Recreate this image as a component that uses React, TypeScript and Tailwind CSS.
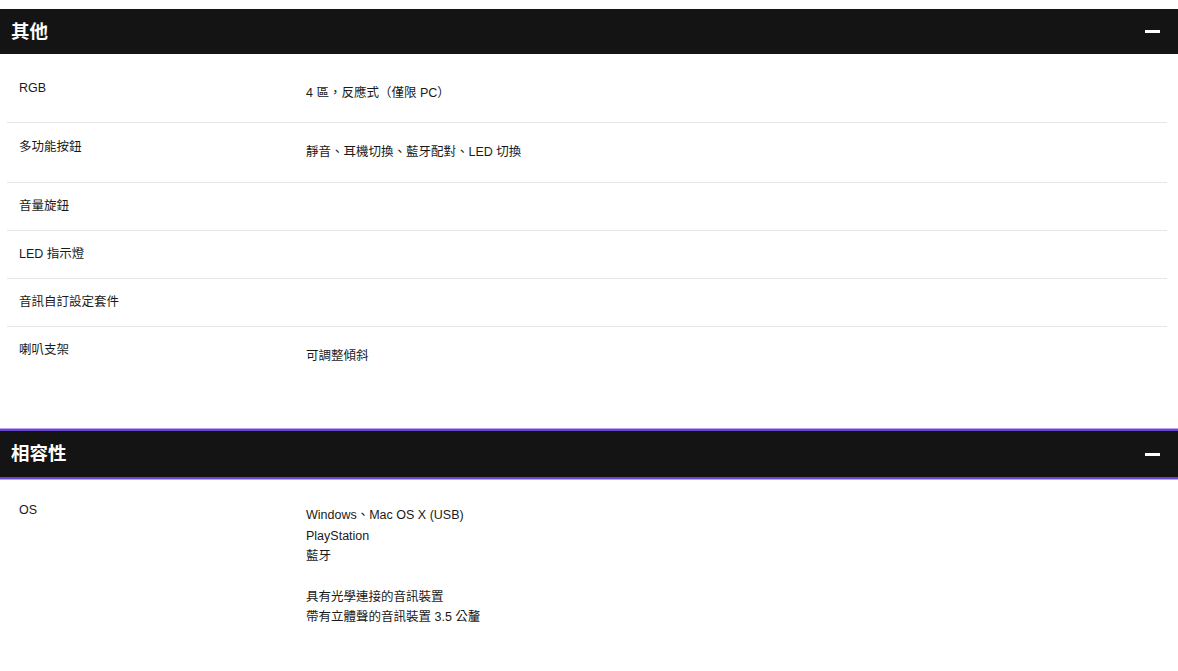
import React from 'react';

type Spec = { label: string; value?: string[] };

const other: Spec[] = [
  { label: 'RGB', value: ['4 區，反應式（僅限 PC）'] },
  { label: '多功能按鈕', value: ['靜音、耳機切換、藍牙配對、LED 切換'] },
  { label: '音量旋鈕' },
  { label: 'LED 指示燈' },
  { label: '音訊自訂設定套件' },
  { label: '喇叭支架', value: ['可調整傾斜'] },
];

const compat: Spec[] = [
  {
    label: 'OS',
    value: ['Windows、Mac OS X (USB)', 'PlayStation', '藍牙', '', '具有光學連接的音訊裝置', '帶有立體聲的音訊裝置 3.5 公釐'],
  },
];

function SectionHeader({ title, active }: { title: string; active?: boolean }) {
  return (
    <div
      className={`flex items-center justify-between bg-[#141414] pl-[11px] pr-[18px] ${
        active ? 'h-[50px] border-y-2 border-[#6a45d4] shadow-[0_0_0_1px_#b8a6ee]' : 'h-[45px]'
      }`}
    >
      <h2 className="text-[18.5px] font-bold text-white">{title}</h2>
      <span className="block w-[15px] h-[3px] bg-white" />
    </div>
  );
}

function SpecList({ items, tight }: { items: Spec[]; tight?: boolean }) {
  return (
    <div className={`pl-[7px] pr-[11px] ${tight ? 'pt-[7px]' : 'pt-[10px]'}`}>
      {items.map((item, i) => (
        <div
          key={item.label}
          className={`flex ${i < items.length - 1 ? 'border-b border-[#e6e6e6]' : ''}`}
        >
          <div className="w-[299px] shrink-0 pl-3 pt-[16.5px] pb-[15.5px] leading-[15px]">{item.label}</div>
          {item.value && (
            <div className="pt-[19px] pb-[19px] leading-[20.4px]">
              {item.value.map((line, j) => (
                <div key={j} className="min-h-[20.4px]">{line}</div>
              ))}
            </div>
          )}
        </div>
      ))}
    </div>
  );
}

export default function App() {
  return (
    <div
      className="min-h-screen bg-white pt-[9px] text-[12.5px] text-[#1a1a1a]"
      style={{ fontFamily: '"Liberation Sans", "Noto Sans CJK TC", sans-serif' }}
    >
      <SectionHeader title="其他" />
      <SpecList items={other} />
      <div className="h-[44px]" />
      <SectionHeader title="相容性" active />
      <SpecList items={compat} tight />
    </div>
  );
}
